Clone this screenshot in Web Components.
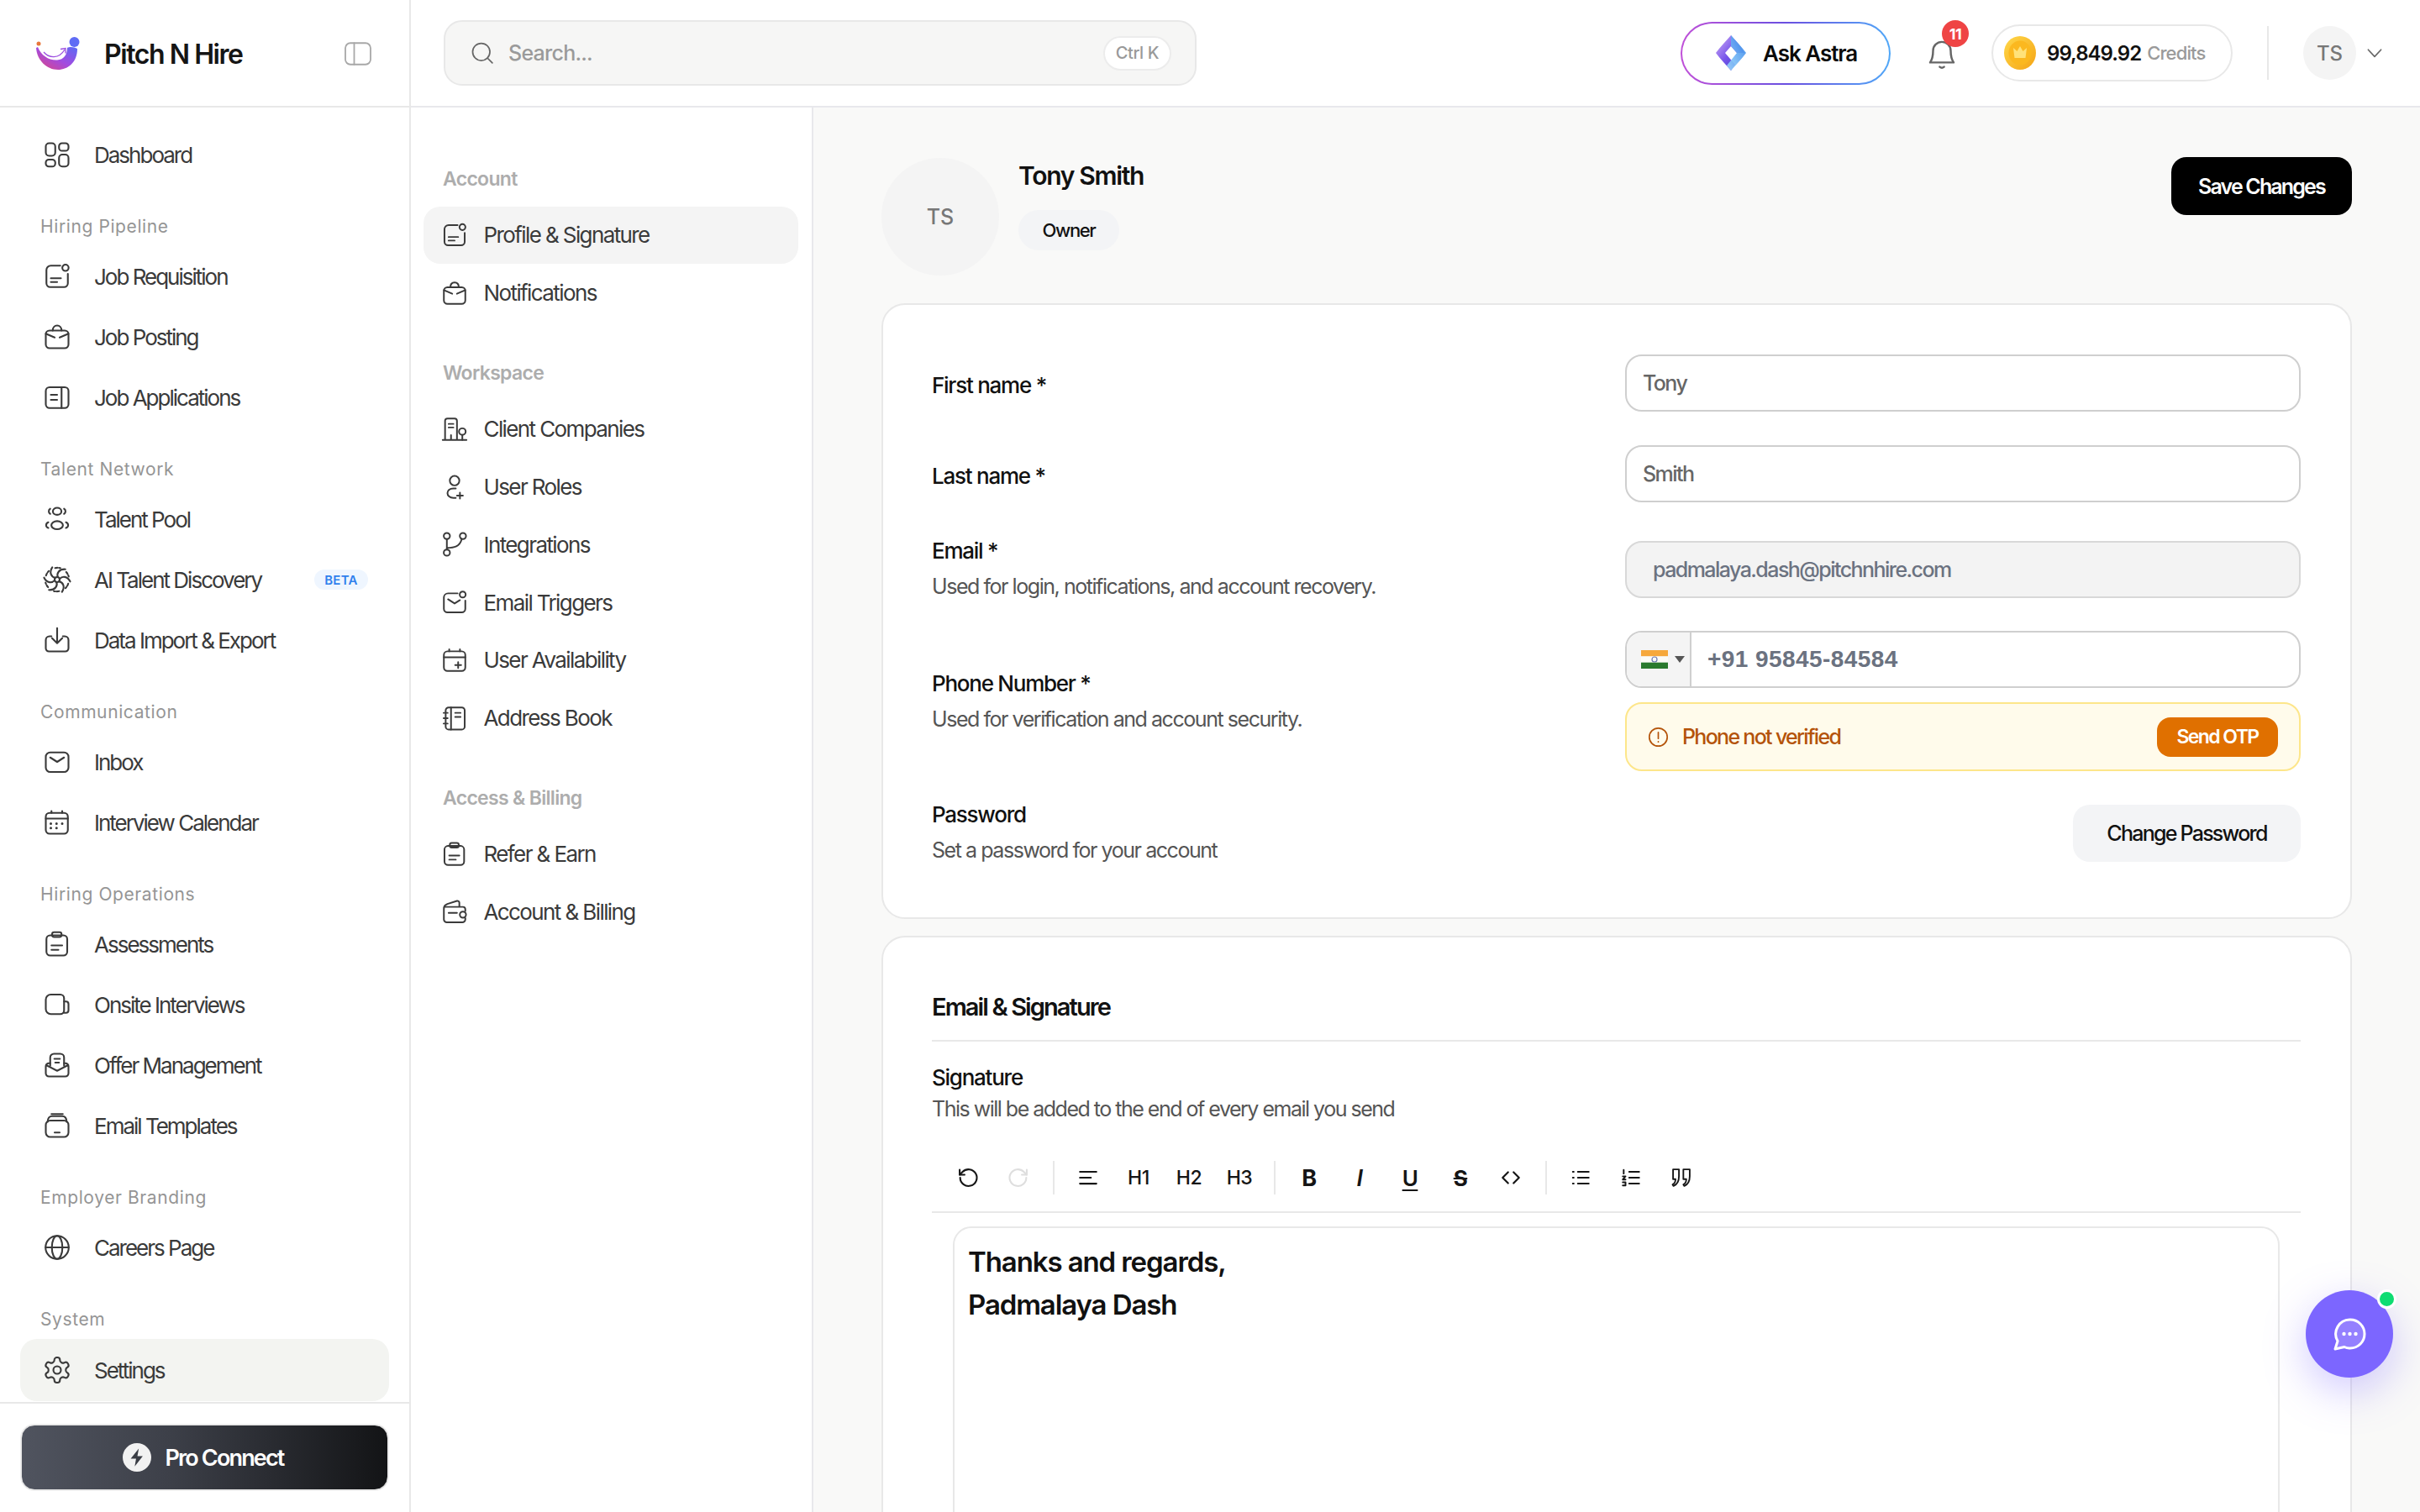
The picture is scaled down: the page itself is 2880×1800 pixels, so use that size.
<!DOCTYPE html>
<html>
<head>
<meta charset="utf-8">
<title>Profile & Signature</title>
<style>
	html, body { margin: 0; height: 100%; overflow: hidden; background: #fff; }
	body { font-family: Inter, "Liberation Sans", sans-serif; color: #111; }
</style>
</head>
<body>
<app-shell>
	<top-bar slot="top"></top-bar>
	<side-nav slot="side"></side-nav>
	<settings-nav slot="sub"></settings-nav>
	<profile-page slot="main"></profile-page>
	<chat-fab slot="fab"></chat-fab>
</app-shell>

<script>
// swirl blades are the same stroke turned around the middle
let swirl = '<circle cx="12" cy="12" r="2"/>';
for (let a = 0; a < 360; a += 60) {
	swirl += `<g transform="rotate(${a} 12 12)"><path d="M12.500 10C11.500 7 13.500 3.500 18.500 3.800"/><path d="M3.200 8.800C3.600 7.400 4.400 6.200 5.400 5.200" stroke-dasharray="1.800 1.300"/></g>`;
}

const ICONS = {
	dashboard: '<rect x="3" y="3" width="7.500" height="10" rx="2.600"/><rect x="13.500" y="3" width="7.500" height="6" rx="2.400"/><rect x="3" y="16" width="7.500" height="5.500" rx="2.400"/><rect x="13.500" y="12" width="7.500" height="9.500" rx="2.600"/>',
	requisition: '<path d="M14.500 3.500H7A3.500 3.500 0 0 0 3.500 7v10.500A3 3 0 0 0 6.500 20.500h11a3 3 0 0 0 3-3V10"/><circle cx="18.600" cy="5.200" r="2.500"/><path d="M7 13.500h8M7 16.500h5"/>',
	briefcase: '<rect x="3" y="7" width="18" height="14" rx="3"/><path d="M8.500 7C8.500 4.500 10 3 12 3s3.500 1.500 3.500 4M3 9.500l7 3M21 9.500l-7 3"/>',
	apps: '<rect x="3" y="4" width="18" height="16.500" rx="3"/><path d="M15.500 4v16.500M7 10h5M7 14h5"/>',
	pool: '<ellipse cx="12" cy="5.800" rx="3.400" ry="2.800"/><ellipse cx="12" cy="16.800" rx="4.600" ry="3.200"/><path d="M6.500 3.800C5 4.500 5 7 6.500 7.800M17.500 3.800C19 4.500 19 7 17.500 7.800M5 14.500C2.700 15.500 2.700 18 5 19M19 14.500c2.300 1 2.300 3.500 0 4.500"/>',
	swirl: swirl,
	upload: '<path d="M12 2.500V14M8 10.500l4 4 4-4M7.500 9H6a3 3 0 0 0-3 3v6.500a2.500 2.500 0 0 0 2.500 2.500h13a2.500 2.500 0 0 0 2.500-2.500V12a3 3 0 0 0-3-3h-1.500"/>',
	mail: '<rect x="3" y="4.500" width="18" height="15.500" rx="3.500"/><path d="M6.500 8.500l5.500 3.500 5.500-3.500"/>',
	calendar: '<rect x="3" y="4.500" width="17.500" height="16.500" rx="3"/><path d="M3 9h17.500M7.500 3v1.500M16 3v1.500"/><path d="M7 13h.01M11.500 13h.01M16 13h.01M7 16.500h.01M11.500 16.500h.01" stroke-width="2"/>',
	clipboard: '<rect x="3.500" y="5" width="16.500" height="16" rx="3"/><rect x="8" y="2.500" width="7.500" height="3.800" rx="1.600"/><path d="M7.500 13h8.500M7.500 16.500h5.500"/>',
	video: '<path d="M14.500 19.500H7A4 4 0 0 1 3 15.500V8a4 4 0 0 1 4-4h7.500a3 3 0 0 1 3 3v9.500a3 3 0 0 1-3 3z"/><path d="M17.500 9.500H19a2 2 0 0 1 2 2v5a2 2 0 0 1-2 2h-1.500"/>',
	offer: '<path d="M6.500 10.500H5.500A2.500 2.500 0 0 0 3 13v5.500A2.500 2.500 0 0 0 5.500 21h13a2.500 2.500 0 0 0 2.500-2.500V13a2.500 2.500 0 0 0-2.500-2.500h-1M3.300 12l8.700 4.500 8.700-4.500"/><path d="M6.500 12.500V6A3 3 0 0 1 9.500 3h5a3 3 0 0 1 3 3v6.500"/><path d="M9.800 7h4.400M10.500 10h3"/>',
	template: '<rect x="3" y="8" width="18" height="13" rx="3.500"/><path d="M4.500 9C4.500 6 6 4.500 8 4.500h8c2 0 3.500 1.500 3.500 4.500M7.500 2.800h9M10 17.500h4"/>',
	globe: '<circle cx="12" cy="12" r="9.200"/><ellipse cx="12" cy="12" rx="4.200" ry="9.200"/><path d="M2.800 12h18.400"/>',
	gear: '<path d="M12.220 2h-.44a2 2 0 0 0-2 2v.18a2 2 0 0 1-1 1.730l-.43.25a2 2 0 0 1-2 0l-.15-.08a2 2 0 0 0-2.730.73l-.22.38a2 2 0 0 0 .73 2.730l.15.1a2 2 0 0 1 1 1.720v.51a2 2 0 0 1-1 1.740l-.15.09a2 2 0 0 0-.73 2.730l.22.38a2 2 0 0 0 2.730.73l.15-.08a2 2 0 0 1 2 0l.43.25a2 2 0 0 1 1 1.730V20a2 2 0 0 0 2 2h.44a2 2 0 0 0 2-2v-.18a2 2 0 0 1 1-1.730l.43-.25a2 2 0 0 1 2 0l.15.08a2 2 0 0 0 2.730-.73l.22-.39a2 2 0 0 0-.73-2.730l-.15-.08a2 2 0 0 1-1-1.740v-.5a2 2 0 0 1 1-1.740l.15-.09a2 2 0 0 0 .73-2.730l-.22-.38a2 2 0 0 0-2.730-.73l-.15.08a2 2 0 0 1-2 0l-.43-.25a2 2 0 0 1-1-1.730V4a2 2 0 0 0-2-2z"/><circle cx="12" cy="12" r="3"/>',
	building: '<path d="M2 21h20M4 21V5a2 2 0 0 1 2-2h6a2 2 0 0 1 2 2v16M7 7.500h4M7 10.500h4M9 17v4"/><circle cx="18.500" cy="14" r="2.800"/><path d="M18.500 16.800V21"/>',
	userplus: '<circle cx="12" cy="6.500" r="4"/><path d="M13 13H11c-3 0-5 1.800-5 4s2 4 5 4h2"/><path d="M16.500 16.500v5M14 19h5"/>',
	branch: '<circle cx="5.500" cy="5" r="2.600"/><circle cx="5.500" cy="19" r="2.600"/><circle cx="19" cy="5" r="2.600"/><path d="M5.500 7.600v8.800M5.500 15c6 0 11-1 12.500-7.500"/>',
	trigger: '<path d="M14.500 4.500H6.500A3.500 3.500 0 0 0 3 8v9.500A3 3 0 0 0 6 20.500h12a3 3 0 0 0 3-3V10.500"/><circle cx="18.800" cy="5.500" r="2.500"/><path d="M6.500 9.500l5.500 3.500 4.500-2.800"/>',
	calplus: '<rect x="3" y="4.500" width="18" height="16.500" rx="3"/><path d="M3 9.500h18M7.500 2.800v1.700M16.500 2.800v1.700M15 13.500v5M12.500 16h5"/>',
	notebook: '<rect x="4.500" y="3" width="16" height="18.500" rx="2.500"/><path d="M9 3v18.500M12.500 7.500h4.500M12.500 11h4.500M2.800 7.500h3.400M2.800 12h3.400M2.800 16.500h3.400"/>',
	wallet: '<path d="M4 7.500h15a2 2 0 0 1 2 2v1.500M21 17v1a2.500 2.500 0 0 1-2.500 2.500H5.500A2.500 2.500 0 0 1 3 18V9.500C3 6.500 4 6 6 5l8-2.500c1-.3 2 .5 2 1.500v3.500M7 12.500h7"/><circle cx="19" cy="14" r="2.600"/>',
	search: '<circle cx="11" cy="11" r="8.200"/><path d="M17 17l4.500 4.500"/>',
	bell: '<path d="M6 10.500a6 6 0 0 1 12 0c0 5 1 6.500 2 8H4c1-1.500 2-3 2-8z"/><path d="M10.500 21.500c1 .8 2 .8 3 0"/>',
	chevron: '<path d="M5 8.500l7 7.500 7-7.500"/>',
	sidebar: '<rect x="2" y="3.500" width="20" height="17" rx="4"/><path d="M9 3.500v17"/>',
	alert: '<circle cx="12" cy="12" r="9.500"/><path d="M12 7v6.500M12 16.800v.2"/>',
	undo: '<path d="M4 12a8.500 8.500 0 1 0 2.500-6L3.500 9"/><path d="M3.500 4v5h5"/>',
	redo: '<path d="M20 12a8.500 8.500 0 1 1-2.500-6l3 3"/><path d="M20.500 4v5h-5"/>',
	align: '<path d="M3 5.500h18M3 12h12M3 18.500h18"/>',
	code: '<path d="M9 6l-6 6 6 6M15 6l6 6-6 6"/>',
	ul: '<path d="M9 5.500h12M9 12h12M9 18.500h12M3.500 5.500h1M3.500 12h1M3.500 18.500h1"/>',
	ol: '<path d="M10 5.500h11M10 12h11M10 18.500h11M4 3.500v4M3 10.500h3l-3 3.500h3M3 17h3v3.500H3"/>',
	quote: '<path d="M3.500 3.500h6v7c0 5-2 8.500-5.500 10l-1-1.500c2-1 3-3 3-5.500h-2.500zM14 3.500h6.500v7c0 5-2 8.500-5.500 10l-1-1.500c2-1 3-3 3-5.500H14z"/>'
};

window.customElements.define(
	'x-icon',
	class extends HTMLElement {
		connectedCallback() {
			if (this.shadowRoot) return;
			const root = this.attachShadow({ mode: 'open' });
			const size = this.getAttribute('size') || 36;
			const sw = this.getAttribute('stroke') || 1.4;
			root.innerHTML = `
				<style>
					:host { display: inline-flex; flex: none; color: inherit; }
					svg { display: block; fill: none; stroke: currentColor; stroke-linecap: round; stroke-linejoin: round; }
				</style>
				<svg width="${size}" height="${size}" viewBox="0 0 24 24" stroke-width="${sw}">${ICONS[this.getAttribute('name')] || ''}</svg>
			`;
		}
	}
);

window.customElements.define(
	'app-shell',
	class extends HTMLElement {
		constructor() {
			super();
			const root = this.attachShadow({ mode: 'open' });
			root.innerHTML = `
				<style>
					:host { display: grid; grid-template-columns: 489px 479px 1fr; grid-template-rows: 128px 1fr; width: 2880px; height: 1800px; overflow: hidden; position: relative; }
					.top { grid-column: 2 / 4; grid-row: 1; }
					.side { grid-column: 1; grid-row: 1 / 3; min-height: 0; }
					.sub { grid-column: 2; grid-row: 2; min-height: 0; }
					.main { grid-column: 3; grid-row: 2; min-height: 0; overflow: hidden; }
				</style>
				<div class="top"><slot name="top"></slot></div>
				<div class="side"><slot name="side"></slot></div>
				<div class="sub"><slot name="sub"></slot></div>
				<div class="main"><slot name="main"></slot></div>
				<slot name="fab"></slot>
			`;
		}
	}
);

window.customElements.define(
	'top-bar',
	class extends HTMLElement {
		constructor() {
			super();
			const root = this.attachShadow({ mode: 'open' });
			root.innerHTML = `
				<style>
					:host { display: flex; align-items: center; height: 128px; box-sizing: border-box; border-bottom: 2px solid #e8e8ec; padding: 0 41px 0 39px; font-family: Inter, sans-serif; background: #fff; }
					.search { display: flex; align-items: center; box-sizing: border-box; width: 896px; height: 78px; background: #f6f6f5; border: 2px solid #e8e8e8; border-radius: 22px; padding: 0 30px; color: #666; }
					.search x-icon { margin-left: -1px; }
					.search span { margin-left: 16px; font-size: 25px; color: #9a9a9a; font-weight: 500; letter-spacing: -0.03em; flex: 1; }
					.kbd { display: flex; align-items: center; height: 41px; padding: 0 13px; box-sizing: border-box; background: #fff; border: 2px solid #ececec; border-radius: 21px; font-size: 20px; color: #999; font-weight: 500; letter-spacing: -0.02em; margin-right: -2px; }
					.ask { margin-left: auto; box-sizing: border-box; width: 250px; height: 75px; border-radius: 38px; border: 2px solid transparent; display: flex; align-items: center; gap: 19px; padding-left: 39px; background: linear-gradient(#fff, #fff) padding-box, linear-gradient(90deg, #c050d8, #6a4fe0 50%, #50a8f8) border-box; font-size: 26px; font-weight: 600; letter-spacing: -0.04em; color: #0b0b0b; }
					.bell { position: relative; margin-left: 40px; color: #666; width: 42px; height: 42px; }
					.badge { position: absolute; left: 21px; top: -18px; width: 32px; height: 32px; border-radius: 50%; background: #ef4444; color: #fff; font-size: 18px; font-weight: 700; display: flex; align-items: center; justify-content: center; letter-spacing: -0.03em; }
					.credits { margin-left: 38px; box-sizing: border-box; width: 287px; height: 68px; border: 2px solid #e8e8e8; border-radius: 34px; display: flex; align-items: center; padding-left: 13px; }
					.credits b { margin-left: 13px; font-size: 24px; font-weight: 600; letter-spacing: -0.04em; color: #111; }
					.credits span { margin-left: 7px; font-size: 22px; font-weight: 500; letter-spacing: -0.04em; color: #9a9a9a; }
					.div { width: 2px; height: 64px; background: #e8e8e8; margin-left: 41px; }
					.me { width: 63px; height: 64px; border-radius: 50%; background: #f4f4f4; margin-left: 41px; display: flex; align-items: center; justify-content: center; font-size: 24px; font-weight: 500; color: #777; }
					.chev { margin-left: 9px; color: #666; }
				</style>
				<div class="search">
					<x-icon name="search" size="30" stroke="1.400"></x-icon>
					<span>Search...</span>
					<div class="kbd">Ctrl K</div>
				</div>
				<div class="ask">
					<svg width="38" height="42" viewBox="0 0 38 42">
						<defs>
							<linearGradient id="as1" x1="0" y1="0" x2="1" y2="1"><stop offset="0" stop-color="#d3b0f5"/><stop offset=".5" stop-color="#7654ea"/><stop offset="1" stop-color="#2f3fc0"/></linearGradient>
							<linearGradient id="as2" x1="1" y1="0" x2="0" y2="1"><stop offset="0" stop-color="#2f80e8"/><stop offset="1" stop-color="#9fd8fc"/></linearGradient>
						</defs>
						<path d="M19 0C13 7 6 14 1 21c5 7 12 14 18 21l5-7-12-14 7-8 7 8h9C32 14 25 7 19 0z" fill="url(#as1)"/>
						<path d="M19 0c6 7 13 14 18 21-5 7-12 14-18 21l-5-6 12-15-7-8z" fill="url(#as2)" opacity=".92"/>
					</svg>
					<span>Ask Astra</span>
				</div>
				<div class="bell">
					<x-icon name="bell" size="42" stroke="1.400"></x-icon>
					<div class="badge">11</div>
				</div>
				<div class="credits">
					<svg width="38" height="40" viewBox="0 0 38 40">
						<defs><linearGradient id="cn" x1="0" y1="0" x2="1" y2="1"><stop offset="0" stop-color="#ffd84a"/><stop offset="1" stop-color="#f5a415"/></linearGradient></defs>
						<ellipse cx="19" cy="20" rx="19" ry="20" fill="url(#cn)"/>
						<ellipse cx="19" cy="20" rx="13.500" ry="14.500" fill="#fbb81f"/>
						<path d="M11 14l4.500 4L19 12l3.500 6 4.500-4-1.500 12h-13z" fill="#ffe27a"/>
					</svg>
					<b>99,849.92</b>
					<span>Credits</span>
				</div>
				<div class="div"></div>
				<div class="me">TS</div>
				<x-icon class="chev" name="chevron" size="26" stroke="1.500"></x-icon>
			`;
		}
	}
);

window.customElements.define(
	'nav-item',
	class extends HTMLElement {
		constructor() {
			super();
			const root = this.attachShadow({ mode: 'open' });
			root.innerHTML = `
				<style>
					:host { display: flex; align-items: center; height: var(--item-h, 72px); box-sizing: border-box; margin: 0 var(--item-mr, 24px) 0 var(--item-ml, 24px); padding-left: var(--item-pl, 25.5px); border-radius: 20px; color: #3a3a3a; font-size: 26px; letter-spacing: var(--item-ls, -2px); white-space: nowrap; }
					:host([active]) { background: var(--item-active, #f3f4f1); }
					.icon { width: var(--icon-w, 62.5px); display: flex; letter-spacing: 0; }
					.extra { margin-left: auto; letter-spacing: 0; }
				</style>
				<div class="icon"><slot name="icon"></slot></div>
				<slot></slot>
				<div class="extra"><slot name="extra"></slot></div>
			`;
		}
	}
);

window.customElements.define(
	'nav-label',
	class extends HTMLElement {
		constructor() {
			super();
			const root = this.attachShadow({ mode: 'open' });
			root.innerHTML = `
				<style>
					:host { display: block; line-height: 32px; padding: var(--label-pad, 34px 0 7px 48px); font-size: var(--label-fs, 21px); font-weight: var(--label-fw, 400); color: var(--label-c, #959595); letter-spacing: var(--label-ls, 0.6px); }
				</style>
				<slot></slot>
			`;
		}
	}
);

window.customElements.define(
	'side-nav',
	class extends HTMLElement {
		constructor() {
			super();
			const rows = [
				['dashboard', 'Dashboard'],
				['Hiring Pipeline'],
				['requisition', 'Job Requisition'],
				['briefcase', 'Job Posting'],
				['apps', 'Job Applications'],
				['Talent Network'],
				['pool', 'Talent Pool'],
				['swirl', 'AI Talent Discovery', 'beta'],
				['upload', 'Data Import &amp; Export'],
				['Communication'],
				['mail', 'Inbox'],
				['calendar', 'Interview Calendar'],
				['Hiring Operations'],
				['clipboard', 'Assessments'],
				['video', 'Onsite Interviews'],
				['offer', 'Offer Management'],
				['template', 'Email Templates'],
				['Employer Branding'],
				['globe', 'Careers Page'],
				['System'],
				['gear', 'Settings', 'active']
			];
			const items = rows.map((r) => {
				if (r.length === 1) return `<nav-label>${r[0]}</nav-label>`;
				const extra = r[2] === 'beta' ? '<span slot="extra" class="beta">BETA</span>' : '';
				return `<nav-item ${r[2] === 'active' ? 'active' : ''}><x-icon slot="icon" name="${r[0]}"></x-icon>${r[1]}${extra}</nav-item>`;
			}).join('');
			const root = this.attachShadow({ mode: 'open' });
			root.innerHTML = `
				<style>
					:host { display: flex; flex-direction: column; height: 1800px; box-sizing: border-box; border-right: 2px solid #e8e8e8; font-family: Inter, sans-serif; background: #fff; }
					header { display: flex; align-items: center; height: 128px; box-sizing: border-box; border-bottom: 2px solid #e8e8e8; padding: 2px 43px 0 43px; flex: none; }
					header b { margin-left: 29px; font-size: 32px; font-weight: 600; letter-spacing: -0.045em; color: #151515; flex: 1; }
					header x-icon { color: #a8a8a8; }
					nav { padding-top: 20px; height: 1541px; box-sizing: border-box; flex: none; overflow: hidden; }
					nav-item:last-child { height: 74px; }
					.beta { display: flex; align-items: center; justify-content: center; width: 64px; height: 24px; border-radius: 12px; background: #eff6ff; color: #2f80ed; font-size: 15px; font-weight: 600; letter-spacing: 0.02em; margin-right: 25px; }
					.foot { flex: 1; border-top: 2px solid #e8e8e8; padding: 25px 25px 0; }
					.pro { display: flex; align-items: center; justify-content: center; gap: 16px; height: 78px; padding-right: 3px; border-radius: 16px; border: 1px solid #e4e4e4; background: linear-gradient(90deg, #50545f, #3d4049 40%, #131416); color: #fff; font-size: 27px; font-weight: 600; letter-spacing: -1.85px; box-sizing: border-box; box-shadow: 0 0 0 1px #eee; }
				</style>
				<header>
					<svg width="52" height="40" viewBox="0 0 52 40">
						<defs><linearGradient id="lg" x1="0" y1="1" x2="1" y2="0"><stop offset="0" stop-color="#e0457e"/><stop offset=".5" stop-color="#a24be0"/><stop offset="1" stop-color="#5a6cf5"/></linearGradient></defs>
						<path d="M0 13C1 28 13 39 26 39 38 39 49 30 49 14 46 12 40 11 37 13 37 21 33 27 25 27.500 15 28 6 22 2 12Z" fill="url(#lg)"/>
						<path d="M9 18C15 25 27 27 34 15" fill="none" stroke="#9c4fe0" stroke-width="1.300"/>
						<path d="M29 14.500l6-1 0 6" fill="none" stroke="#9c4fe0" stroke-width="1.300"/>
						<circle cx="45.500" cy="6" r="6" fill="#5f6cf5"/>
						<circle cx="3" cy="8" r="2.500" fill="#e8773c"/>
					</svg>
					<b>Pitch N Hire</b>
					<x-icon name="sidebar" size="36" stroke="1.200"></x-icon>
				</header>
				<nav>${items}</nav>
				<div class="foot">
					<div class="pro">
						<svg width="34" height="34" viewBox="0 0 32 32"><circle cx="16" cy="16" r="16" fill="#f2f2f2"/><path d="M18 6l-9 11.500h6L13.500 26l9-11.500h-6z" fill="#3a3d45"/></svg>
						<span>Pro Connect</span>
					</div>
				</div>
			`;
		}
	}
);

window.customElements.define(
	'settings-nav',
	class extends HTMLElement {
		constructor() {
			super();
			const rows = [
				['Account'],
				['requisition', 'Profile &amp; Signature', 'active'],
				['briefcase', 'Notifications'],
				['Workspace'],
				['building', 'Client Companies'],
				['userplus', 'User Roles'],
				['branch', 'Integrations'],
				['trigger', 'Email Triggers'],
				['calplus', 'User Availability'],
				['notebook', 'Address Book'],
				['Access &amp; Billing'],
				['clipboard', 'Refer &amp; Earn'],
				['wallet', 'Account &amp; Billing']
			];
			const items = rows.map((r) => {
				if (r.length === 1) return `<nav-label>${r[0]}</nav-label>`;
				return `<nav-item ${r[2] ? 'active' : ''}><x-icon slot="icon" name="${r[0]}" size="34"></x-icon>${r[1]}</nav-item>`;
			}).join('');
			const root = this.attachShadow({ mode: 'open' });
			root.innerHTML = `
				<style>
					:host { display: block; height: 100%; box-sizing: border-box; border-right: 2px solid #e8e8ec; padding-top: 69px; font-family: Inter, sans-serif; background: #fff;
						--item-h: 68.8px; --item-ml: 15px; --item-mr: 16px; --item-pl: 20px; --icon-w: 51.500px; --item-active: #f4f4f4; --item-ls: -1.6px;
						--label-pad: 44.6px 0 16.6px 38px; --label-fs: 23px; --label-fw: 600; --label-c: #adadad; --label-ls: -0.03em; }
					nav-label:first-of-type { padding-top: 0; }
				</style>
				${items}
			`;
		}
	}
);

window.customElements.define(
	'form-row',
	class extends HTMLElement {
		constructor() {
			super();
			const root = this.attachShadow({ mode: 'open' });
			root.innerHTML = `
				<style>
					:host { display: grid; grid-template-columns: 825px 804px; align-items: center; }
					.left { padding-top: var(--shift, 0); }
					.l { font-size: 26px; font-weight: 500; letter-spacing: -1.25px; color: #111; line-height: 40px; }
					.s { font-size: 25px; letter-spacing: -1.45px; color: #555; line-height: 44px; }
				</style>
				<div class="left">
					<div class="l"><slot name="label"></slot></div>
					<div class="s"><slot name="sub"></slot></div>
				</div>
				<div class="r"><slot></slot></div>
			`;
		}
	}
);

window.customElements.define(
	'text-field',
	class extends HTMLElement {
		constructor() {
			super();
			const root = this.attachShadow({ mode: 'open' });
			root.innerHTML = `
				<style>
					:host { display: flex; align-items: center; height: 68px; box-sizing: border-box; border: 2px solid #cfcfcf; border-radius: 20px; padding-left: 19px; background: #fff; font-size: 25px; font-weight: 500; letter-spacing: -1.55px; color: #666; }
					:host([disabled]) { background: #f3f3f3; padding-left: 31px; color: #6b7280; border-color: #d8d8d8; }
				</style>
				<slot></slot>
			`;
		}
	}
);

window.customElements.define(
	'phone-field',
	class extends HTMLElement {
		constructor() {
			super();
			const root = this.attachShadow({ mode: 'open' });
			root.innerHTML = `
				<style>
					:host { display: flex; flex-direction: column; gap: 17px; }
					.input { display: flex; align-items: stretch; height: 68px; box-sizing: border-box; border: 2px solid #cfcfcf; border-radius: 20px; overflow: hidden; background: #fff; }
					.flag { display: flex; align-items: center; width: 77px; box-sizing: border-box; padding-left: 17px; gap: 8px; background: #f4f4f4; border-right: 2px solid #cfcfcf; }
					.arrow { width: 0; height: 0; border-left: 6px solid transparent; border-right: 6px solid transparent; border-top: 8px solid #555; }
					.num { display: flex; align-items: center; padding-left: 19px; font-family: "Liberation Sans", Arial, sans-serif; font-size: 28px; font-weight: 700; color: #6b7280; letter-spacing: 0.015em; }
					.warn { display: flex; align-items: center; height: 82px; box-sizing: border-box; border: 2px solid #fde68a; border-radius: 20px; background: #fffbeb; padding: 0 25px; color: #b45309; font-size: 25px; font-weight: 500; letter-spacing: -1.7px; }
					.warn x-icon { margin-left: -1px; }
					.warn span { margin-left: 15px; flex: 1; }
					.otp { display: flex; align-items: center; justify-content: center; width: 144px; height: 47px; border-radius: 16px; background: #e07000; color: #fff; font-size: 23px; font-weight: 600; letter-spacing: -1.6px; }
				</style>
				<div class="input">
					<div class="flag">
						<svg width="32" height="22" viewBox="0 0 32 22"><rect width="32" height="7.400" fill="#f6a83a"/><rect y="7.400" width="32" height="7.300" fill="#fbfbf6"/><rect y="14.700" width="32" height="7.300" fill="#2a7a2e"/><circle cx="16" cy="11" r="3" fill="none" stroke="#6a78b0" stroke-width="1.200"/></svg>
						<div class="arrow"></div>
					</div>
					<div class="num">+91 95845-84584</div>
				</div>
				<div class="warn">
					<x-icon name="alert" size="27" stroke="1.500"></x-icon>
					<span>Phone not verified</span>
					<div class="otp">Send OTP</div>
				</div>
			`;
		}
	}
);

window.customElements.define(
	'app-card',
	class extends HTMLElement {
		constructor() {
			super();
			const root = this.attachShadow({ mode: 'open' });
			root.innerHTML = `
				<style>
					:host { display: block; box-sizing: border-box; background: #fff; border: 2px solid #e8e8e8; border-radius: 28px; padding: var(--card-pad, 59px 59px 58px 58px); }
				</style>
				<slot></slot>
			`;
		}
	}
);

window.customElements.define(
	'rich-toolbar',
	class extends HTMLElement {
		constructor() {
			super();
			const root = this.attachShadow({ mode: 'open' });
			root.innerHTML = `
				<style>
					:host { display: flex; align-items: center; height: 82px; box-sizing: border-box; padding-left: 13px; border-bottom: 2px solid #e8e8e8; color: #151515; margin-top: 25px; }
					.b { width: 60px; display: flex; justify-content: center; align-items: center; font-size: 23px; font-weight: 500; letter-spacing: -0.02em; }
					.off { color: #dedede; }
					.sep { width: 2px; height: 40px; background: #e8e8e8; margin: 0 10px 0 11px; flex: none; }
					.bold { font-size: 27px; font-weight: 700; }
					.it { font-size: 27px; font-style: italic; font-weight: 600; }
					.un { font-size: 26px; font-weight: 600; text-decoration: underline; text-underline-offset: 4px; }
					.st { font-size: 26px; font-weight: 700; text-decoration: line-through; }
				</style>
				<div class="b"><x-icon name="undo" size="28" stroke="1.800"></x-icon></div>
				<div class="b off"><x-icon name="redo" size="28" stroke="1.800"></x-icon></div>
				<div class="sep"></div>
				<div class="b"><x-icon name="align" size="26" stroke="2"></x-icon></div>
				<div class="b">H1</div>
				<div class="b">H2</div>
				<div class="b">H3</div>
				<div class="sep"></div>
				<div class="b bold">B</div>
				<div class="b it">I</div>
				<div class="b un">U</div>
				<div class="b st">S</div>
				<div class="b"><x-icon name="code" size="26" stroke="2"></x-icon></div>
				<div class="sep"></div>
				<div class="b"><x-icon name="ul" size="26" stroke="1.800"></x-icon></div>
				<div class="b"><x-icon name="ol" size="26" stroke="1.800"></x-icon></div>
				<div class="b"><x-icon name="quote" size="28" stroke="1.600"></x-icon></div>
			`;
		}
	}
);

window.customElements.define(
	'profile-page',
	class extends HTMLElement {
		constructor() {
			super();
			const root = this.attachShadow({ mode: 'open' });
			root.innerHTML = `
				<style>
					:host { display: block; height: 100%; box-sizing: border-box; background: #f9f9f8; padding: 60px 81px 0; font-family: Inter, sans-serif; overflow: hidden; }
					.head { display: flex; align-items: flex-start; height: 140px; margin-bottom: 33px; }
					.avatar { width: 140px; height: 140px; border-radius: 50%; background: #f4f4f4; display: flex; align-items: center; justify-content: center; font-size: 25px; font-weight: 500; color: #777; flex: none; }
					.who { margin-left: 23px; flex: 1; }
					.name { font-size: 30px; font-weight: 600; letter-spacing: -1.3px; color: #111; line-height: 42px; }
					.role { display: inline-flex; align-items: center; justify-content: center; width: 120px; height: 48px; border-radius: 24px; background: #f3f4f6; font-size: 22px; font-weight: 500; letter-spacing: -1.4px; color: #111; margin-top: 20px; }
					.save { display: flex; align-items: center; justify-content: center; width: 215px; height: 69px; margin-top: -1px; border-radius: 18px; background: #000; color: #fff; font-size: 25px; font-weight: 600; letter-spacing: -1.85px; }
					.change { margin-left: auto; display: flex; align-items: center; justify-content: center; width: 271px; height: 68px; border-radius: 20px; background: #f3f4f6; font-size: 25px; font-weight: 500; letter-spacing: -1.75px; color: #111; }
					form-row + form-row { margin-top: var(--gap); }
					.c2 { margin-top: 20px; --card-pad: 0 59px 0 58px; height: 900px; }
					.title { font-size: 29px; font-weight: 600; letter-spacing: -1.9px; color: #111; height: 124px; line-height: 40px; box-sizing: border-box; padding-top: 63px; border-bottom: 2px solid #e8e8e8; }
					.sig { font-size: 26px; font-weight: 500; letter-spacing: -1.25px; color: #111; margin-top: 23px; line-height: 40px; }
					.sub { font-size: 25px; letter-spacing: -1.5px; color: #555; line-height: 34px; }
					.editor { margin: 16px 25px 0; height: 800px; border: 2px solid #e8e8e8; border-radius: 22px; padding: 15px 16px; font-size: 33px; font-weight: 600; letter-spacing: -1.1px; line-height: 51px; color: #111; }
				</style>
				<div class="head">
					<div class="avatar">TS</div>
					<div class="who">
						<div class="name">Tony Smith</div>
						<div class="role">Owner</div>
					</div>
					<div class="save">Save Changes</div>
				</div>
				<app-card>
					<form-row style="--shift: 6px">
						<span slot="label">First name *</span>
						<text-field>Tony</text-field>
					</form-row>
					<form-row style="--gap: 40px; --shift: 6px">
						<span slot="label">Last name *</span>
						<text-field>Smith</text-field>
					</form-row>
					<form-row style="--gap: 38px">
						<span slot="label">Email *</span>
						<span slot="sub">Used for login, notifications, and account recovery.</span>
						<text-field disabled>padmalaya.dash@pitchnhire.com</text-field>
					</form-row>
					<form-row style="--gap: 31px; --shift: 3px">
						<span slot="label">Phone Number *</span>
						<span slot="sub">Used for verification and account security.</span>
						<phone-field></phone-field>
					</form-row>
					<form-row style="--gap: 32px">
						<span slot="label">Password</span>
						<span slot="sub">Set a password for your account</span>
						<div class="change">Change Password</div>
					</form-row>
				</app-card>
				<app-card class="c2">
					<div class="title">Email &amp; Signature</div>
					<div class="sig">Signature</div>
					<div class="sub">This will be added to the end of every email you send</div>
					<rich-toolbar></rich-toolbar>
					<div class="editor">Thanks and regards,<br>Padmalaya Dash</div>
				</app-card>
			`;
		}
	}
);

window.customElements.define(
	'chat-fab',
	class extends HTMLElement {
		constructor() {
			super();
			const root = this.attachShadow({ mode: 'open' });
			root.innerHTML = `
				<style>
					:host { position: absolute; left: 2744px; top: 1536px; width: 104px; height: 104px; border-radius: 50%; background: #7c66ff; box-shadow: 0 16px 50px rgba(124, 102, 255, 0.35); display: flex; align-items: center; justify-content: center; }
					.dot { position: absolute; left: 85px; top: -1px; width: 17px; height: 17px; border-radius: 50%; background: #0fdc72; border: 3px solid #fff; }
				</style>
				<svg width="40" height="40" viewBox="0 0 40 40">
					<path d="M21 3a17 17 0 0 1 0 34c-3 0-5-.5-7-1.500L3 38l3-9.500A17 17 0 0 1 21 3z" fill="#9480ff" stroke="#fff" stroke-width="3" stroke-linejoin="round"/>
					<circle cx="13.500" cy="20" r="2.200" fill="#fff"/><circle cx="20.500" cy="20" r="2.200" fill="#fff"/><circle cx="27.500" cy="20" r="2.200" fill="#fff"/>
				</svg>
				<div class="dot"></div>
			`;
		}
	}
);
</script>
</body>
</html>
